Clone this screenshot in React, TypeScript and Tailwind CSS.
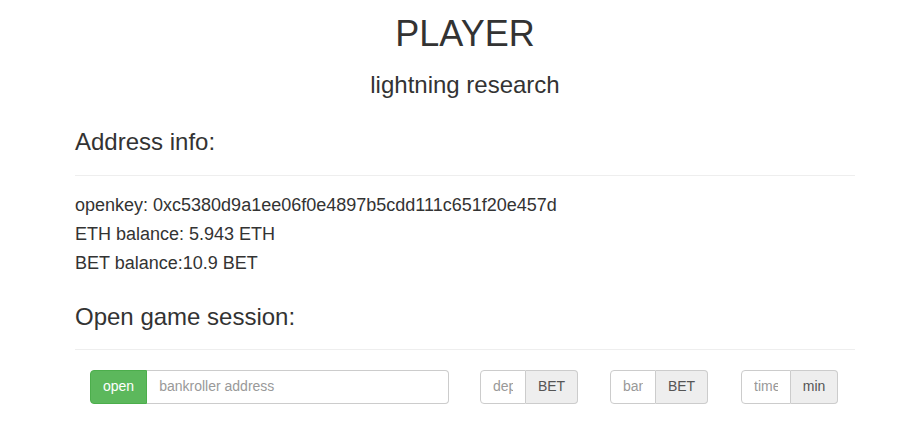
export default function App() {
  return (
    <div className="min-h-screen bg-white font-['Liberation_Sans',Arial,sans-serif] text-[#333]">
      <div className="ml-[75px] w-[780px]">
        <h1 className="mt-[14px] text-center text-[36px] leading-[1.1]">PLAYER</h1>
        <h3 className="mt-[18px] text-center text-[24px] leading-[1.1]">lightning research</h3>

        <h3 className="mt-[31px] text-[24px] leading-[1.1]">Address info:</h3>
        <hr className="mt-[20px] mb-[15px] border-t border-[#eee]" />

        <div className="text-[18px] leading-[29px]">
          <div>openkey: 0xc5380d9a1ee06f0e4897b5cdd111c651f20e457d</div>
          <div>ETH balance: 5.943 ETH</div>
          <div>BET balance:10.9 BET</div>
        </div>

        <h3 className="mt-[26px] text-[24px] leading-[1.1]">Open game session:</h3>
        <hr className="mt-[18px] mb-[20px] border-t border-[#eee]" />

        <div className="flex items-start pl-[15px] text-[14px]">
          <div className="flex h-[34px] w-[359px]">
            <button className="rounded-l-[4px] border border-[#4cae4c] bg-[#5cb85c] px-[12px] text-white">
              open
            </button>
            <input
              className="min-w-0 flex-1 rounded-r-[4px] border border-l-0 border-[#ccc] px-[12px] text-[#555] placeholder:text-[#999] outline-none"
              placeholder="bankroller address"
            />
          </div>

          <div className="ml-[31px] flex h-[34px]">
            <input
              className="w-[46px] min-w-0 rounded-l-[4px] border border-[#ccc] px-[12px] text-[#555] placeholder:text-[#999] outline-none"
              placeholder="deposit"
            />
            <span className="flex w-[52px] items-center justify-center rounded-r-[4px] border border-l-0 border-[#ccc] bg-[#eee] text-[#555]">
              BET
            </span>
          </div>

          <div className="ml-[32px] flex h-[34px]">
            <input
              className="w-[46px] min-w-0 rounded-l-[4px] border border-[#ccc] px-[12px] text-[#555] placeholder:text-[#999] outline-none"
              placeholder="bankroll"
            />
            <span className="flex w-[52px] items-center justify-center rounded-r-[4px] border border-l-0 border-[#ccc] bg-[#eee] text-[#555]">
              BET
            </span>
          </div>

          <div className="ml-[33px] flex h-[34px]">
            <input
              className="w-[50px] min-w-0 rounded-l-[4px] border border-[#ccc] px-[12px] text-[#555] placeholder:text-[#999] outline-none"
              placeholder="time"
            />
            <span className="flex w-[47px] items-center justify-center rounded-r-[4px] border border-l-0 border-[#ccc] bg-[#eee] text-[#555]">
              min
            </span>
          </div>
        </div>
      </div>
    </div>
  )
}
